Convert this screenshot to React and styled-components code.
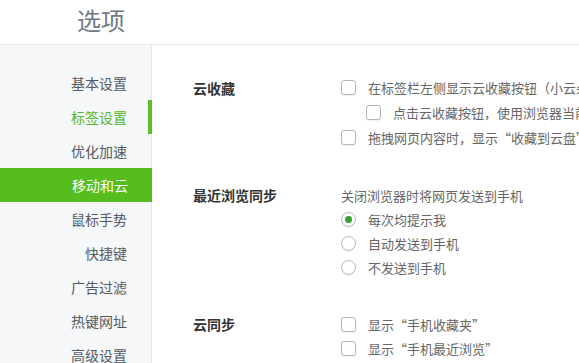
import React from "react";
import styled, { createGlobalStyle } from "styled-components";

const Global = createGlobalStyle`
  html, body { margin: 0; padding: 0; background: #fff; }
  body {
    font-family: "Noto Sans CJK SC", "Noto Sans", sans-serif;
    width: 579px; height: 363px; overflow: hidden;
  }
  * { box-sizing: border-box; }
`;

const Page = styled.div`
  width: 579px;
  height: 363px;
  display: flex;
  flex-direction: column;
  overflow: hidden;
`;

const Header = styled.header`
  height: 45px;
  flex: none;
  border-bottom: 1px solid #e6e8ea;
  display: flex;
  align-items: center;
  padding-left: 77px;
`;

const Title = styled.h1`
  margin: 0;
  font-size: 24px;
  font-weight: 400;
  color: #6d7985;
  line-height: 1;
  padding-bottom: 4px;
`;

const Body = styled.div`
  flex: 1;
  display: flex;
  min-height: 0;
`;

const Sidebar = styled.nav`
  width: 152px;
  flex: none;
  background: #f6f7f9;
  border-right: 1px solid #e2e4e7;
  padding-top: 21px;
  display: flex;
  flex-direction: column;
`;

const NavItem = styled.div`
  position: relative;
  height: 34px;
  flex: none;
  display: flex;
  align-items: center;
  justify-content: flex-end;
  padding-right: 24px;
  margin-right: ${(p) => (p.$selected ? "-1px" : "0")};
  font-size: 14px;
  color: ${(p) => (p.$selected ? "#fff" : p.$current ? "#58b62a" : "#555a60")};
  background: ${(p) => (p.$selected ? "#56bd1e" : "transparent")};
  ${(p) =>
    p.$current &&
    `
    &::after {
      content: "";
      position: absolute;
      top: 0;
      right: -1px;
      width: 4px;
      height: 34px;
      background: #5cbf24;
    }
  `}
`;

const Content = styled.main`
  flex: 1;
  padding: 30px 0 0 41px;
  white-space: nowrap;
  overflow: hidden;
`;

const Section = styled.section`
  display: grid;
  grid-template-columns: 148px auto;
  margin-top: ${(p) => (p.$first ? "0" : "33px")};
`;

const Label = styled.div`
  font-size: 14px;
  font-weight: 700;
  color: #333;
  height: ${(p) => p.$row}px;
  display: flex;
  align-items: center;
`;

const Options = styled.div`
  display: flex;
  flex-direction: column;
`;

const Row = styled.label`
  height: ${(p) => p.$row}px;
  display: flex;
  align-items: center;
  padding-left: ${(p) => (p.$indent ? "25px" : "0")};
  font-size: 13px;
  color: #666;
`;

const Desc = styled.div`
  height: 24px;
  display: flex;
  align-items: center;
  font-size: 13px;
  color: #666;
`;

const Box = styled.span`
  width: 15px;
  height: 15px;
  flex: none;
  border: 1px solid #b4b7ba;
  border-radius: ${(p) => (p.$radio ? "50%" : "3px")};
  background: #fff;
  margin-right: 12px;
  display: flex;
  align-items: center;
  justify-content: center;
  box-shadow: 0 1px 1px rgba(0, 0, 0, 0.06);
`;

const Dot = styled.span`
  width: 7px;
  height: 7px;
  border-radius: 50%;
  background: #30a32a;
`;

const Check = ({ children, row = 24, indent }) => (
  <Row $row={row} $indent={indent}>
    <Box />
    {children}
  </Row>
);

const Radio = ({ children, checked }) => (
  <Row $row={24}>
    <Box $radio>{checked && <Dot />}</Box>
    {children}
  </Row>
);

const nav = ["基本设置", "标签设置", "优化加速", "移动和云", "鼠标手势", "快捷键", "广告过滤", "热键网址", "高级设置"];

export default function App() {
  return (
    <>
      <Global />
      <Page>
        <Header>
          <Title>选项</Title>
        </Header>
        <Body>
          <Sidebar>
            {nav.map((n) => (
              <NavItem key={n} $current={n === "标签设置"} $selected={n === "移动和云"}>
                {n}
              </NavItem>
            ))}
          </Sidebar>
          <Content>
            <Section $first>
              <Label $row={25}>云收藏</Label>
              <Options>
                <Check row={25}>在标签栏左侧显示云收藏按钮（小云朵）</Check>
                <Check row={25} indent>点击云收藏按钮，使用浏览器当前窗口打开</Check>
                <Check row={25}>拖拽网页内容时，显示“收藏到云盘”</Check>
              </Options>
            </Section>
            <Section>
              <Label $row={24}>最近浏览同步</Label>
              <Options>
                <Desc>关闭浏览器时将网页发送到手机</Desc>
                <Radio checked>每次均提示我</Radio>
                <Radio>自动发送到手机</Radio>
                <Radio>不发送到手机</Radio>
              </Options>
            </Section>
            <Section>
              <Label $row={24}>云同步</Label>
              <Options>
                <Check>显示“手机收藏夹”</Check>
                <Check>显示“手机最近浏览”</Check>
              </Options>
            </Section>
          </Content>
        </Body>
      </Page>
    </>
  );
}
